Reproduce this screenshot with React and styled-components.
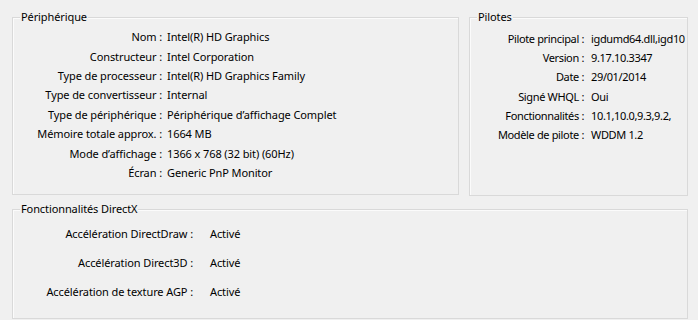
import React from "react";
import styled, { createGlobalStyle } from "styled-components";

const Global = createGlobalStyle`
  html, body { margin: 0; padding: 0; background: #f0f0f0; }
  body {
    font-family: "Noto Sans", "Open Sans", sans-serif;
    font-size: 11px;
    letter-spacing: -0.1px;
    color: #000;
    width: 698px;
    height: 320px;
    overflow: hidden;
  }
`;

const Page = styled.div`
  display: grid;
  grid-template-columns: 447px 219px;
  column-gap: 10px;
  row-gap: 5px;
  padding: 9px 10px 0 12px;
  align-items: start;
`;

const GroupBox = styled.fieldset`
  margin: 0;
  padding: 0;
  min-width: 0;
  box-sizing: border-box;
  height: ${(p) => p.$h}px;
  border: 1px solid #d9d9d9;
  box-shadow: inset 1px 1px 0 #fbfbfb;
  grid-column: ${(p) => (p.$wide ? "1 / -1" : "auto")};
  overflow: hidden;
`;

const Legend = styled.legend`
  margin-left: 7px;
  padding: 0 1px;
  line-height: 16px;
  background: #f0f0f0;
  white-space: nowrap;
`;

const InfoGrid = styled.div`
  display: grid;
  grid-template-columns: ${(p) => p.$label}px ${(p) => p.$value};
  column-gap: ${(p) => p.$gap}px;
  grid-auto-rows: ${(p) => p.$row}px;
  align-items: center;
  padding-top: ${(p) => p.$top}px;
  letter-spacing: ${(p) => p.$track || -0.1}px;
`;

const Label = styled.span`
  text-align: right;
  white-space: nowrap;
`;

const Value = styled.span`
  white-space: nowrap;
`;

const device = [
  ["Nom :", "Intel(R) HD Graphics"],
  ["Constructeur :", "Intel Corporation"],
  ["Type de processeur :", "Intel(R) HD Graphics Family"],
  ["Type de convertisseur :", "Internal"],
  ["Type de périphérique :", "Périphérique d’affichage Complet"],
  ["Mémoire totale approx. :", "1664 MB"],
  ["Mode d’affichage :", "1366 x 768 (32 bit) (60Hz)"],
  ["Écran :", "Generic PnP Monitor"],
];

const drivers = [
  ["Pilote principal :", "igdumd64.dll,igd10"],
  ["Version :", "9.17.10.3347"],
  ["Date :", "29/01/2014"],
  ["Signé WHQL :", "Oui"],
  ["Fonctionnalités :", "10.1,10.0,9.3,9.2,"],
  ["Modèle de pilote :", "WDDM 1.2"],
];

const directx = [
  ["Accélération DirectDraw :", "Activé"],
  ["Accélération Direct3D :", "Activé"],
  ["Accélération de texture AGP :", "Activé"],
];

function Rows({ items }) {
  return items.map(([l, v]) => (
    <React.Fragment key={l}>
      <Label>{l}</Label>
      <Value>{v}</Value>
    </React.Fragment>
  ));
}

export default function App() {
  return (
    <>
      <Global />
      <Page>
        <GroupBox $h={186}>
          <Legend>Périphérique</Legend>
          <InfoGrid $label={149} $gap={5} $value="1fr" $row={19.43} $top={2}>
            <Rows items={device} />
          </InfoGrid>
        </GroupBox>
        <GroupBox $h={187}>
          <Legend>Pilotes</Legend>
          <InfoGrid
            $label={114}
            $gap={7}
            $value="92px"
            $row={19.3}
            $top={3.5}
            $track={-0.35}
          >
            <Rows items={drivers} />
          </InfoGrid>
        </GroupBox>
        <GroupBox $h={118} $wide>
          <Legend>Fonctionnalités DirectX</Legend>
          <InfoGrid $label={180} $gap={17} $value="1fr" $row={29} $top={2}>
            <Rows items={directx} />
          </InfoGrid>
        </GroupBox>
      </Page>
    </>
  );
}
